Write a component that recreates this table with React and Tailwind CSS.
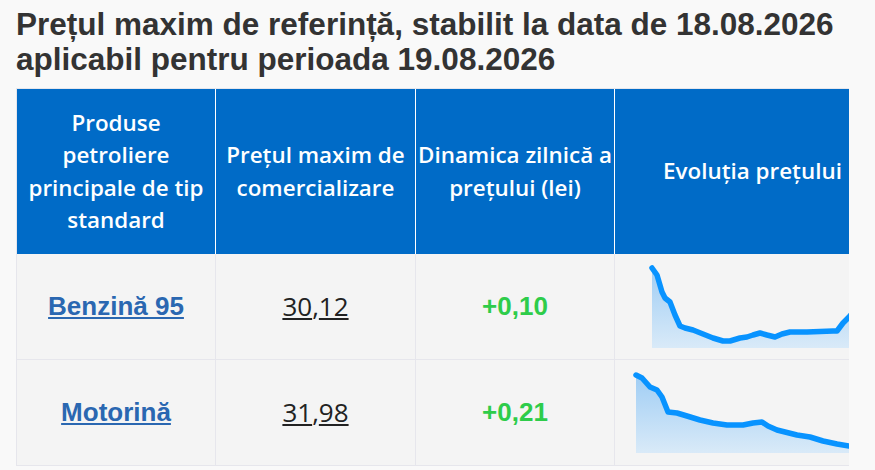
const chartA = [
  [0, 2], [5, 9], [10, 26], [13, 32], [18, 36], [23, 49], [28, 60], [33, 62], [41, 64],
  [51, 68], [61, 72], [71, 75], [78, 75], [88, 72], [95, 71], [101, 69], [108, 67],
  [115, 69], [123, 71], [130, 68], [138, 66], [155, 66], [181, 65], [185, 65],
  [191, 57], [197, 51], [202, 45],
];

const chartB = [
  [0, 2], [6, 5], [14, 14], [21, 17], [26, 24], [32, 39], [41, 40], [51, 43], [64, 47],
  [77, 50], [91, 52], [107, 52], [117, 50], [126, 49], [132, 53], [141, 57], [149, 59],
  [161, 62], [174, 64], [187, 68], [201, 71], [213, 73], [234, 75],
];

const Spark = ({ id, points, width, height }) => {
  const line = points.map(([x, y], i) => `${i ? "L" : "M"}${x} ${y}`).join(" ");
  const area = `${line} L${width} ${height} L0 ${height} Z`;
  return (
    <svg width={width} height={height} viewBox={`0 0 ${width} ${height}`} className="shrink-0 overflow-visible">
      <defs>
        <linearGradient id={id} x1="0" y1="0" x2="0" y2="1">
          <stop offset="0%" stopColor="#9fcdf4" />
          <stop offset="100%" stopColor="#d9eaf8" />
        </linearGradient>
      </defs>
      <path d={area} fill={`url(#${id})`} />
      <path d={line} fill="none" stroke="#0893ff" strokeWidth="5.5" strokeLinejoin="round" strokeLinecap="round" />
    </svg>
  );
};

const rows = [
  { name: "Benzină 95", price: ["30", "12"], diff: "+0,10", chart: { id: "ga", points: chartA, width: 202, height: 82 } },
  { name: "Motorină", price: ["31", "98"], diff: "+0,21", chart: { id: "gb", points: chartB, width: 234, height: 80 } },
];

const headCell = "h-[165px] flex items-center justify-center text-center px-[2px] border-r border-white text-white font-semibold text-[22.4px] leading-[32.5px]";
const bodyCell = "h-[106px] flex items-center justify-center border-r border-b border-[#e6e6ec] bg-[#f4f4f4]";

export default function App() {
  return (
    <div className="min-h-[470px] bg-[#f9f9f9] pt-[7px]" style={{ fontFamily: "'Liberation Sans', Arial, sans-serif" }}>
      <h2 className="mx-4 mb-[11px] text-[31.5px] leading-[35px] font-bold text-[#333]">
        Prețul maxim de referință, stabilit la data de 18.08.2026 aplicabil pentru perioada 19.08.2026
      </h2>
      <div className="ml-4 w-[833px] overflow-hidden">
        <div className="grid w-[875px] grid-cols-[199px_200px_199px_276px] border-l border-t border-[#e6e6ec]" style={{ fontFamily: "'Open Sans', sans-serif" }}>
          <div className={`${headCell} bg-[#006bc7]`}>Produse petroliere principale de tip standard</div>
          <div className={`${headCell} bg-[#006bc7]`}>Prețul maxim de comercializare</div>
          <div className={`${headCell} bg-[#006bc7]`}>Dinamica zilnică a prețului (lei)</div>
          <div className={`${headCell} bg-[#006bc7]`}>Evoluția prețului</div>
          {rows.map((r) => (
            <div key={r.name} className="contents">
              <div className={bodyCell}>
                <a href="#" className="text-[26px] font-bold text-[#2a67b1] underline" style={{ fontFamily: "'Liberation Sans', Arial, sans-serif" }}>
                  {r.name}
                </a>
              </div>
              <div className={`${bodyCell} text-[26px] text-[#222]`}>
                <span className="underline">{r.price[0]}</span>,<span className="underline">{r.price[1]}</span>
              </div>
              <div className={`${bodyCell} text-[26px] font-bold text-[#2ecc4a]`} style={{ fontFamily: "'Liberation Sans', Arial, sans-serif" }}>
                {r.diff}
              </div>
              <div className={bodyCell}>
                <Spark {...r.chart} />
              </div>
            </div>
          ))}
        </div>
      </div>
    </div>
  );
}
